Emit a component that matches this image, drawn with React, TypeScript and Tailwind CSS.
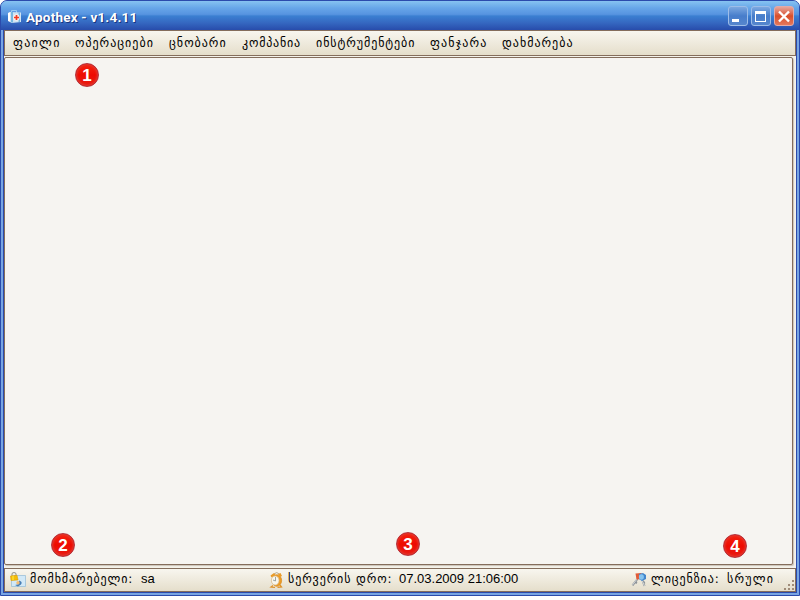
import React from "react";

const menuItems = [
  { label: "ფაილი", box: "w-[62px] tracking-[1.3px]" },
  { label: "ოპერაციები", box: "w-[94px] tracking-[1px]" },
  { label: "ცნობარი", box: "w-[73px] tracking-[1px]" },
  { label: "კომპანია", box: "w-[74px] tracking-[0.8px]" },
  { label: "ინსტრუმენტები", box: "w-[114px] tracking-[0.92px]" },
  { label: "ფანჯარა", box: "w-[72px] tracking-[1.15px]" },
  { label: "დახმარება", box: "w-[80px] tracking-[1px]" },
];

function AppIcon() {
  return (
    <svg className="h-4 w-4" viewBox="0 0 16 16">
      <path d="M4.5 4V1.5h5V4" fill="none" stroke="#9bcdf2" />
      <path d="M1 4l2-1v10l-2-1z" fill="#fff" />
      <path d="M3 3l11 .5V13l-9.500 1L3 13z" fill="#cfe4f2" />
      <path d="M4 3h2v10.500H4zM11.500 3.500h1.500V13h-1.500z" fill="#75b8e1" />
      <circle cx="9.500" cy="8.500" r="3.200" fill="#f8f1f0" />
      <path d="M9.500 6v5M7 8.500h5" stroke="#f13a20" strokeWidth="1.7" />
    </svg>
  );
}

function UserIcon() {
  return (
    <svg className="h-4 w-4" viewBox="0 0 16 16">
      <path d="M4 3.5h11.5v11H1.5V8z" fill="#d2e9f7" stroke="#92bad5" strokeWidth=".7" />
      <path d="M9 8.5q4 1 2 4l-3 2-3-1.500 3.500-.7z" fill="#487fb5" />
      <circle cx="8" cy="10.7" r="1.7" fill="#f4bb72" />
      <path d="M2 4V2q2-3 4 0v2" fill="none" stroke="#a1a19a" strokeWidth="1.2" />
      <path d="M.5 4l6.5-.7 1 4.7-7 .5z" fill="#f5bd09" stroke="#df9d00" strokeWidth=".6" />
      <path d="M3 4v4" stroke="#fff04a" />
    </svg>
  );
}

function ClockIcon() {
  return (
    <svg className="h-4 w-4" viewBox="0 0 16 16">
      <path d="M5 2q3-3 5 0" fill="none" stroke="#b5a78d" />
      <path d="M4 13.5l-2 1.6 4 .3M11 13l1.5 2-4 .4" fill="none" stroke="#df942d" strokeWidth="1.3" />
      <ellipse cx="7.8" cy="8.5" rx="4.8" ry="5.8" fill="#ec9c25" stroke="#d98719" strokeWidth=".7" />
      <path d="M1.5 3.5L5 1l1.5 2-4 2.5zM9 2l2.5-1L13 4l-2 1z" fill="#e99b27" />
      <ellipse cx="6.2" cy="8.5" rx="3.8" ry="4.5" fill="#f8f6ec" stroke="#d9bf94" strokeWidth=".7" />
      <path d="M6.5 5v4L4 8" fill="none" stroke="#a1a6a0" />
    </svg>
  );
}

function KeysIcon() {
  return (
    <svg className="h-4 w-4" viewBox="0 0 16 16">
      <path d="M6.500 7L1.500 13.300M4 10l2 1" stroke="#8c9298" strokeWidth="2" />
      <path d="M6 7l-4.5 6" stroke="#e1e3e4" strokeWidth=".8" />
      <path d="M4.5 1.5l6-.5 1 6-6 .5z" fill="#e25c38" />
      <path d="M11 7l2.5 7M12 11l2-.7" stroke="#8d9499" strokeWidth="2" />
      <path d="M10.5 7l3 7" stroke="#e7e8e7" strokeWidth=".8" />
      <path d="M8 2l4-1 3 2v4l-4 2-3-2z" fill="#4386cc" />
      <ellipse cx="10.4" cy="5" rx="2.5" ry="2.8" fill="#86c4ef" />
    </svg>
  );
}

function WindowButton({ kind }: { kind: "min" | "max" | "close" }) {
  const face =
    kind === "close"
      ? "border-[#e3aaa8] bg-linear-to-b from-[#e5a49b] via-[#d84d28] to-[#e5785b]"
      : "border-[#9dbde8] bg-linear-to-b from-[#7ca8e0] via-[#477dcb] to-[#5686cd]";
  return (
    <div className={"h-5 w-5 rounded-[3px] border " + face}>
      <svg className="h-[18px] w-[18px]" viewBox="0 0 18 18" shapeRendering="crispEdges">
        {kind === "min" && <path d="M3 12h7v3H3z" fill="#fff" />}
        {kind === "max" && <path d="M3 4h11v11H3zM4 7v7h9V7z" fill="#fff" fillRule="evenodd" />}
        {kind === "close" && (
          <path d="M4 4.500l10 10M14 4.500L4 14.500" stroke="#fff" strokeWidth="2.4" shapeRendering="auto" />
        )}
      </svg>
    </div>
  );
}

function Badge({ n, place }: { n: number; place: string }) {
  return (
    <div
      className={
        "absolute flex h-6 w-6 items-center justify-center rounded-full border border-[#b5303a] bg-linear-to-b from-[#f5200f] via-[#ee0a02] to-[#e81a12] font-['Liberation_Sans',sans-serif] text-[17px] leading-none font-bold text-white shadow-[inset_0_0_2px_1px_#e23a30] " +
        place
      }
    >
      {n}
    </div>
  );
}

export default function App() {
  return (
    <div className="h-[600px] w-[800px] overflow-hidden bg-white font-['DejaVu_Sans',sans-serif] text-black">
      <div className="flex h-[596px] flex-col overflow-hidden rounded-t-[7px] border border-[#2b4bac] bg-[#78a5e3]">
        <header className="flex h-[29px] shrink-0 items-center bg-[linear-gradient(to_bottom,#86c3f1_0%,#66a5e8_25%,#5794e0_46%,#3b7fd1_52%,#3568c1_75%,#284cab_100%)] pr-[5px] pl-[6px]">
          <div className="mt-[2px]">
            <AppIcon />
          </div>
          <span className="mt-[3px] ml-[3px] flex-1 font-[Roboto,sans-serif] text-[13.5px] leading-4 font-bold tracking-[0.2px] text-white [text-shadow:1px_1px_#183681]">
            Apothex - v1.4.11
          </span>
          <div className="mt-px flex gap-[3px]">
            <WindowButton kind="min" />
            <WindowButton kind="max" />
            <WindowButton kind="close" />
          </div>
        </header>
        <div className="mx-[2px] mb-[2px] flex min-h-0 flex-1 flex-col border-x border-b border-[#2b4bac] bg-[#f4f2ea]">
          <nav className="flex h-[26px] shrink-0 items-center border border-[#846d5c] bg-linear-to-b from-[#f8f6ef] to-[#e5decb] pl-2 text-[12px] leading-4 whitespace-nowrap">
            {menuItems.map((item) => (
              <span key={item.label} className={"shrink-0 " + item.box}>
                {item.label}
              </span>
            ))}
          </nav>
          <main className="relative mt-px mr-[3px] h-[508px] shrink-0 rounded-[2px] border border-[#846d5c] bg-[#f6f4f1] shadow-[1px_1px_1px_#cbc3b8]">
            <Badge n={1} place="top-[5px] left-[70px]" />
            <Badge n={2} place="top-[475px] left-[46px]" />
            <Badge n={3} place="top-[474px] left-[391px]" />
            <Badge n={4} place="top-[476px] left-[718px]" />
          </main>
          <footer className="mt-[3px] flex h-6 shrink-0 items-center border border-[#846d5c] bg-linear-to-b from-[#f8f6ef] to-[#e5decb] pl-[5px] text-[12px] leading-4 whitespace-nowrap">
            <div className="flex w-[259px] shrink-0 items-center">
              <UserIcon />
              <span className="-mt-[2px] ml-1 w-[111px] tracking-[0.9px]">მომხმარებელი:</span>
              <span className="-mt-[2px] font-['Liberation_Sans',sans-serif] text-[13px]">sa</span>
            </div>
            <div className="flex w-[362px] shrink-0 items-center">
              <ClockIcon />
              <span className="-mt-[2px] ml-[3px] w-[111px] tracking-[0.9px]">სერვერის დრო:</span>
              <span className="-mt-[2px] font-['Liberation_Sans',sans-serif] text-[13px]">07.03.2009 21:06:00</span>
            </div>
            <div className="flex flex-1 items-center">
              <KeysIcon />
              <span className="-mt-[2px] ml-1 w-[76px] tracking-[0.9px]">ლიცენზია:</span>
              <span className="-mt-[2px] tracking-[1.2px]">სრული</span>
            </div>
            <svg className="mt-[9px] h-3 w-3" viewBox="0 0 12 12" shapeRendering="crispEdges">
              <path d="M9 1h2v2H9zM5 5h2v2H5zM9 5h2v2H9zM1 9h2v2H1zM5 9h2v2H5zM9 9h2v2H9z" fill="#a08c78" />
            </svg>
          </footer>
        </div>
      </div>
    </div>
  );
}
